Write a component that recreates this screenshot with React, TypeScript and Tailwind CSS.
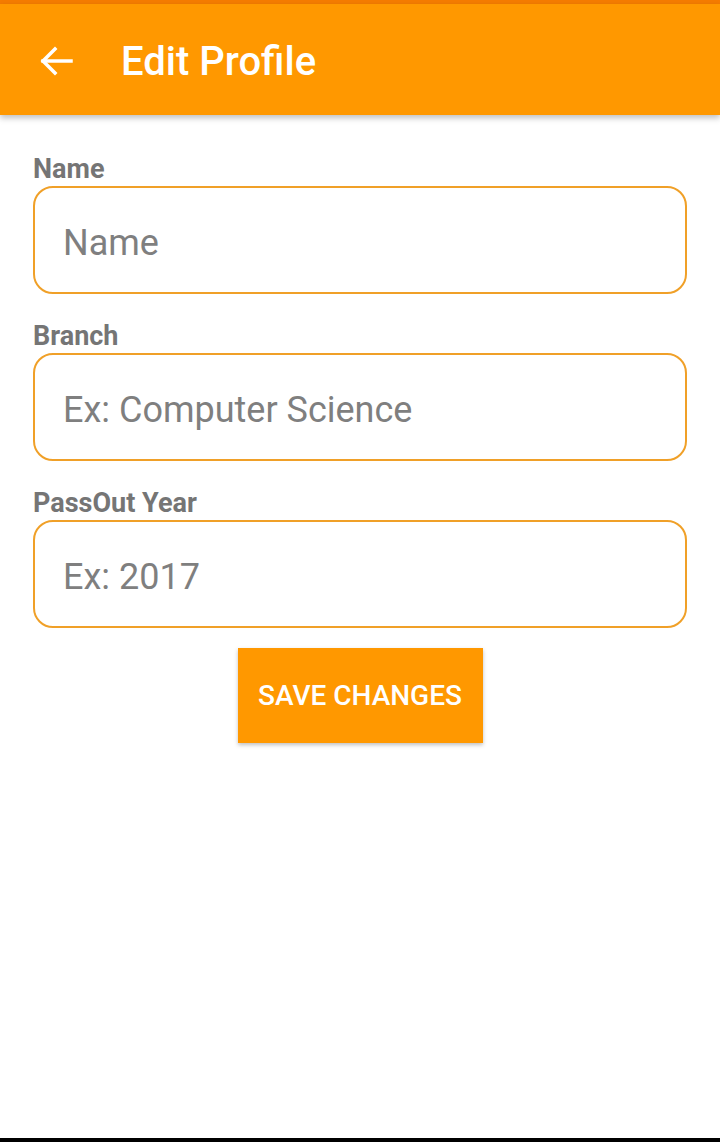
import React from "react";

function Field({ label, placeholder }: { label: string; placeholder: string }) {
  return (
    <div className="flex flex-col">
      <div className="text-[27px] leading-[30px] font-bold text-[#757575] h-[30px] mb-[2px]">{label}</div>
      <div className="h-[108px] rounded-[20px] border-2 border-[#F0A028] flex items-center px-[28px] pt-[6px]">
        <span className="text-[36px] text-[#7f7f7f]">{placeholder}</span>
      </div>
    </div>
  );
}

export default function App() {
  return (
    <div className="w-[720px] h-[1142px] bg-white flex flex-col relative overflow-hidden" style={{ fontFamily: "Roboto, 'Noto Sans', sans-serif" }}>
      <div className="h-[4px] bg-[#F57C00]" />
      <div className="h-[111px] bg-[#FF9800] flex items-center shadow-[0_3px_6px_rgba(0,0,0,0.25)] z-10">
        <svg className="ml-[40px] mt-[2px]" width="34" height="30" viewBox="0 0 34 30" fill="none" stroke="white" strokeWidth="3.5" strokeLinecap="square">
          <path d="M3 15 H31" />
          <path d="M15 3 L3 15 L15 27" strokeLinejoin="miter" />
        </svg>
        <span className="ml-[47px] mt-[4px] text-[40px] font-medium text-white">Edit Profile</span>
      </div>
      <div className="flex flex-col gap-[27px] px-[33px] pt-[39px]">
        <Field label="Name" placeholder="Name" />
        <Field label="Branch" placeholder="Ex: Computer Science" />
        <Field label="PassOut Year" placeholder="Ex: 2017" />
      </div>
      <div className="flex justify-center mt-[20px]">
        <button className="w-[245px] h-[95px] bg-[#FF9800] text-white text-[28px] font-medium shadow-[0_2px_4px_rgba(0,0,0,0.25)]">SAVE CHANGES</button>
      </div>
      <div className="flex-1" />
      <div className="h-[4px] bg-black" />
    </div>
  );
}
